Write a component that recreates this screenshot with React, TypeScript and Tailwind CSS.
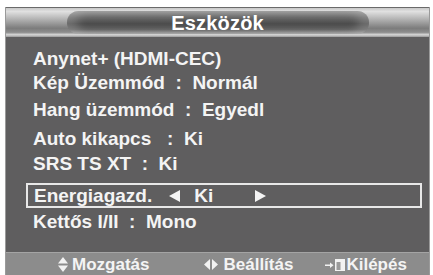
import React from 'react';

const font = { fontFamily: '"Liberation Sans", Arial, sans-serif' };

// menu rows above the highlighted one
const rows = [
  { text: 'Anynet+ (HDMI-CEC)', mt: 'mt-[11px]' },
  { text: 'Kép Üzemmód  :  Normál', mt: 'mt-[2px]' },
  { text: 'Hang üzemmód  :  Egyedl', mt: 'mt-[5px]' },
  { text: 'Auto kikapcs   :  Ki', mt: 'mt-[7px]' },
  { text: 'SRS TS XT  :  Ki', mt: 'mt-[3px]' },
];

const UpDown = () => (
  <svg width="10" height="15" viewBox="0 0 10 15" className="mr-[4px]">
    <polygon points="5,0 10,6.5 0,6.5" fill="#f2f2f2" />
    <polygon points="0,8.5 10,8.5 5,15" fill="#f2f2f2" />
  </svg>
);

const LeftRight = () => (
  <svg width="14" height="11" viewBox="0 0 14 11" className="mr-[5px]">
    <polygon points="0,5.5 6,0 6,11" fill="#f2f2f2" />
    <polygon points="8,0 14,5.5 8,11" fill="#f2f2f2" />
  </svg>
);

const ExitIcon = () => (
  <svg width="20" height="14" viewBox="0 0 20 14" className="mr-[1px]">
    <rect x="0" y="7.5" width="6" height="1.5" fill="#f2f2f2" />
    <polygon points="5,5.5 8.5,8.25 5,11" fill="#f2f2f2" />
    <rect x="10" y="2" width="10" height="12" fill="#f2f2f2" />
    <rect x="11.5" y="5" width="4" height="8" fill="#9a9a9a" />
  </svg>
);

const Tri = ({ dir }: { dir: 'l' | 'r' }) => (
  <svg width="11" height="12" viewBox="0 0 11 12" className="block">
    {dir === 'l' ? (
      <polygon points="0,6 11,0 11,12" fill="#f4f4f4" />
    ) : (
      <polygon points="0,0 11,6 0,12" fill="#f4f4f4" />
    )}
  </svg>
);

export default function App() {
  return (
    <div className="w-[433px] h-[275px] bg-white pt-[7px] pl-[5px] overflow-hidden" style={font}>
      <div className="flex flex-col w-[425px] h-[268px] border-l border-r border-[#9a9a9a]">
        {/* title bar */}
        <div className="h-[30px] flex items-center justify-center border-t border-[#6a6a6a] bg-[linear-gradient(to_bottom,#c8c8c8_0%,#e0e0e0_12%,#b0b0b0_40%,#7c7c7c_70%,#8e8e8e_84%,#d6d6d6_92%,#9a9a9a_100%)]">
          <div className="w-[302px] h-[23px] rounded-full flex items-center justify-center bg-[linear-gradient(to_bottom,#8e8e8e_0%,#666_30%,#4c4c4c_55%,#5c5c5c_80%,#9a9a9a_100%)] shadow-[inset_10px_0_10px_rgba(255,255,255,0.18),inset_-10px_0_10px_rgba(255,255,255,0.18)]">
            <span className="text-white font-bold text-[20px] leading-none tracking-[0.2px]">Eszközök</span>
          </div>
        </div>

        {/* body */}
        <div className="flex-1 bg-[#5f5e5f] flex flex-col text-[#f4f4f4] font-bold text-[19px] leading-[22px]">
          {rows.map((r, i) => (
            <div key={i} className={`${r.mt} pl-[27px] whitespace-pre`}>{r.text}</div>
          ))}
          <div className="mt-[8px] ml-[20px] w-[396px] h-[25px] border-2 border-[#e8e8e8] flex items-center pl-[6px] whitespace-pre">
            <span>Energiagazd.</span>
            <span className="ml-[17px]"><Tri dir="l" /></span>
            <span className="ml-[14px]">Ki</span>
            <span className="ml-[42px]"><Tri dir="r" /></span>
          </div>
          <div className="mt-[3px] pl-[27px] whitespace-pre">Kettős I/II  :  Mono</div>
        </div>

        {/* footer */}
        <div className="h-[23px] bg-[#8c8c8c] border-t border-[#a4a4a4] flex items-center text-[#f4f4f4] font-bold text-[17px] leading-none">
          <div className="ml-[52px] flex items-center">
            <UpDown />
            <span>Mozgatás</span>
          </div>
          <div className="ml-[55px] flex items-center">
            <LeftRight />
            <span>Beállítás</span>
          </div>
          <div className="ml-[32px] flex items-center">
            <ExitIcon />
            <span>Kilépés</span>
          </div>
        </div>
      </div>
    </div>
  );
}
